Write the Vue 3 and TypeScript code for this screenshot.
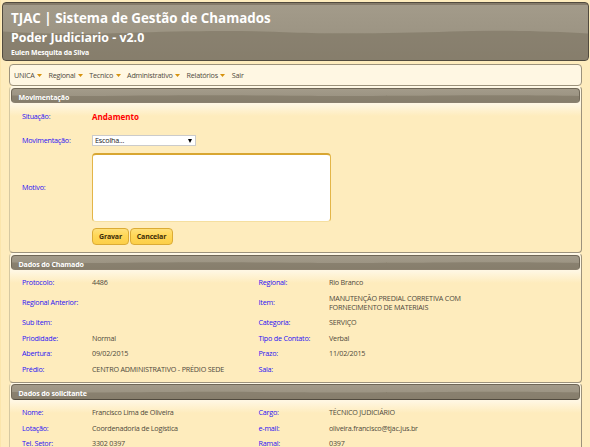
<script setup lang="ts">
interface Field {
  label: string
  value: string
}

const menu: { text: string; sub: boolean }[] = [
  { text: 'UNICA', sub: true },
  { text: 'Regional', sub: true },
  { text: 'Tecnico', sub: true },
  { text: 'Administrativo', sub: true },
  { text: 'Relatórios', sub: true },
  { text: 'Sair', sub: false },
]

const chamado: Field[] = [
  { label: 'Protocolo:', value: '4486' },
  { label: 'Regional:', value: 'Rio Branco' },
  { label: 'Regional Anterior:', value: '' },
  { label: 'Item:', value: 'MANUTENÇÃO PREDIAL CORRETIVA COM FORNECIMENTO DE MATERIAIS' },
  { label: 'Sub item:', value: '' },
  { label: 'Categoria:', value: 'SERVIÇO' },
  { label: 'Priodidade:', value: 'Normal' },
  { label: 'Tipo de Contato:', value: 'Verbal' },
  { label: 'Abertura:', value: '09/02/2015' },
  { label: 'Prazo:', value: '11/02/2015' },
  { label: 'Prédio:', value: 'CENTRO ADMINISTRATIVO - PRÉDIO SEDE' },
  { label: 'Sala:', value: '' },
]

const solicitante: Field[] = [
  { label: 'Nome:', value: 'Francisco Lima de Oliveira' },
  { label: 'Cargo:', value: 'TÉCNICO JUDICIÁRIO' },
  { label: 'Lotação:', value: 'Coordenadoria de Logística' },
  { label: 'e-mail:', value: 'oliveira.francisco@tjac.jus.br' },
  { label: 'Tel. Setor:', value: '3302 0397' },
  { label: 'Ramal:', value: '0397' },
]

const isUpper = (s: string): boolean => s === s.toUpperCase()

const wave = 'M0 30 C40 33 80 33 120 31.5 C190 29 240 28.5 290 31 C330 32.5 400 32 450 30 C500 28 550 30 588 32 V60 H0 Z'
</script>

<template>
  <div class="page">
    <header class="banner">
      <svg class="wave" viewBox="0 0 588 60" preserveAspectRatio="none"><path :d="wave" /></svg>
      <h1 class="title">TJAC | Sistema de Gestão de Chamados</h1>
      <h2 class="subtitle">Poder Judiciario - v2.0</h2>
      <p class="user">Eulen Mesquita da Silva</p>
    </header>

    <main class="content">
      <nav class="menu">
        <a v-for="m in menu" :key="m.text" class="entry">
          <span>{{ m.text }}</span>
          <svg v-if="m.sub" class="caret" viewBox="0 0 5 3"><path d="M0 0H5L2.5 3Z" /></svg>
        </a>
      </nav>

      <section class="panel panel-form">
        <div class="bar">
          <svg class="wave" viewBox="0 0 588 60" preserveAspectRatio="none"><path :d="wave" /></svg>
          <span class="bar-text">Movimentação</span>
        </div>
        <div class="grid grid-form">
          <span class="label">Situação:</span>
          <strong class="status">Andamento</strong>
          <span class="label">Movimentação:</span>
          <div class="select">
            <span>Escolha...</span>
            <svg class="arrow" viewBox="0 0 4 4"><path d="M0 0H4L2 4Z" /></svg>
          </div>
          <span class="label">Motivo:</span>
          <div class="textarea"></div>
          <span></span>
          <div class="buttons">
            <button class="btn save">Gravar</button>
            <button class="btn cancel">Cancelar</button>
          </div>
        </div>
      </section>

      <section class="panel panel-call">
        <div class="bar">
          <svg class="wave" viewBox="0 0 588 60" preserveAspectRatio="none"><path :d="wave" /></svg>
          <span class="bar-text">Dados do Chamado</span>
        </div>
        <div class="grid grid-call">
          <template v-for="f in chamado" :key="f.label">
            <span class="label">{{ f.label }}</span>
            <span class="value" :class="{ upper: isUpper(f.value) }">{{ f.value }}</span>
          </template>
        </div>
      </section>

      <section class="panel panel-person">
        <div class="bar">
          <svg class="wave" viewBox="0 0 588 60" preserveAspectRatio="none"><path :d="wave" /></svg>
          <span class="bar-text">Dados do solicitante</span>
        </div>
        <div class="grid grid-person">
          <template v-for="f in solicitante" :key="f.label">
            <span class="label">{{ f.label }}</span>
            <span class="value" :class="{ upper: isUpper(f.value) }">{{ f.value }}</span>
          </template>
        </div>
      </section>
    </main>
  </div>
</template>

<style>
body {
  margin: 0;
  overflow: hidden;
}
</style>

<style scoped>
.page {
  box-sizing: border-box;
  width: 590px;
  height: 447px;
  overflow: hidden;
  padding: 2px 1px 0 2px;
  background: linear-gradient(90deg, #fbe5ac 1px, #feecbd 1px);
  font-family: "Open Sans", "Noto Sans", sans-serif;
  font-size: 7.2px;
  letter-spacing: -0.22px;
  color: #4f4a3c;
}
.banner {
  position: relative;
  box-sizing: border-box;
  height: 59px;
  padding: 5px 0 0 8px;
  border: 1px solid #514a3e;
  border-radius: 4px;
  overflow: hidden;
  color: #fff;
  background: linear-gradient(#857b6a 0 2px, #a39b8a 2px, #968e7d);
}
.wave {
  position: absolute;
  left: 0;
  top: 0;
  width: 100%;
  height: 100%;
  fill: #766c5a;
  fill-opacity: 0.48;
}
.title,
.subtitle,
.user {
  position: relative;
  margin: 0;
  font-weight: 700;
  letter-spacing: 0;
  white-space: nowrap;
}
.title {
  font-size: 13.35px;
  line-height: 20px;
}
.subtitle {
  font-size: 12.4px;
  line-height: 20px;
}
.user {
  font-size: 6.9px;
  letter-spacing: -0.14px;
  line-height: 9px;
}
.content {
  width: 573px;
  margin: 3px 0 0 7px;
}
.menu {
  box-sizing: border-box;
  display: flex;
  align-items: center;
  gap: 6.5px;
  height: 22px;
  padding: 0 4px;
  border: 1px solid #9c927c;
  border-radius: 4px;
  background: #fff7e3;
  letter-spacing: -0.24px;
}
.entry {
  display: flex;
  align-items: center;
  gap: 2.5px;
  white-space: nowrap;
}
.caret {
  width: 5px;
  height: 3px;
  fill: #d6920e;
}
.panel {
  box-sizing: border-box;
  border: 1px solid #9c927c;
  border-top-color: #fffae9;
  border-left-color: #d5c8a2;
  border-radius: 4px;
  padding: 1px;
  background: linear-gradient(#fff7e3 0 17px, #feecbd 29px);
}
.panel-form {
  height: 167px;
}
.panel-call {
  height: 130px;
}
.panel-person {
  height: 90px;
  padding-top: 0;
}
.bar {
  position: relative;
  box-sizing: border-box;
  height: 15px;
  padding-left: 6.5px;
  border: 1px solid #6f6757;
  border-bottom-color: #8a806f;
  border-radius: 4px;
  overflow: hidden;
  color: #fff;
  background: linear-gradient(#a39b8a, #968e7d);
}
.panel-person .bar {
  height: 16px;
  border-bottom-color: #514a3e;
}
.bar-text {
  position: relative;
  display: block;
  font-size: 7.1px;
  letter-spacing: -0.18px;
  font-weight: 700;
  line-height: 16px;
}
.panel-person .bar-text {
  line-height: 17px;
}
.grid {
  display: grid;
  align-items: center;
  padding-left: 11px;
  line-height: 9px;
}
.grid-form {
  grid-template-columns: 70px 1fr;
  grid-template-rows: 21px 27px 66px 32px;
  padding-top: 3px;
}
.grid-call,
.grid-person {
  grid-template-columns: 70px 166.5px 70.5px 150px;
}
.grid-call {
  grid-template-rows: 15.5px 24px 16px 15.5px 15.5px 15.5px;
  padding-top: 5px;
}
.grid-person {
  grid-template-rows: repeat(3, 15.5px);
  padding-top: 5px;
}
.label {
  color: #2a10f5;
  white-space: nowrap;
}
.upper {
  letter-spacing: -0.19px;
}
.status {
  color: #f00;
  font-size: 8px;
  letter-spacing: 0;
}
.select {
  box-sizing: border-box;
  display: flex;
  align-items: center;
  justify-content: space-between;
  width: 104px;
  height: 11px;
  padding: 0 3px 0 2px;
  border: 1px solid #cbcbcb;
  background: #fff;
  color: #222;
  letter-spacing: -0.2px;
}
.arrow {
  width: 4px;
  height: 4px;
  fill: #000;
}
.textarea {
  box-sizing: border-box;
  width: 239px;
  height: 69px;
  border: 1px solid #e3b548;
  border-top: 2px solid #d8a632;
  border-bottom-color: #f5dfa0;
  border-radius: 4px;
  background: #fff;
}
.buttons {
  display: flex;
  gap: 1px;
}
.btn {
  box-sizing: border-box;
  height: 17px;
  padding: 0;
  border: 1px solid #dbab35;
  border-radius: 4px;
  background: linear-gradient(#ffe07a, #ffd757 45%, #fccf48);
  font: 700 7px/15px "Open Sans", "Noto Sans", sans-serif;
  letter-spacing: -0.15px;
  color: #3c2c0a;
}
.save {
  width: 37px;
}
.cancel {
  width: 43px;
}
</style>
